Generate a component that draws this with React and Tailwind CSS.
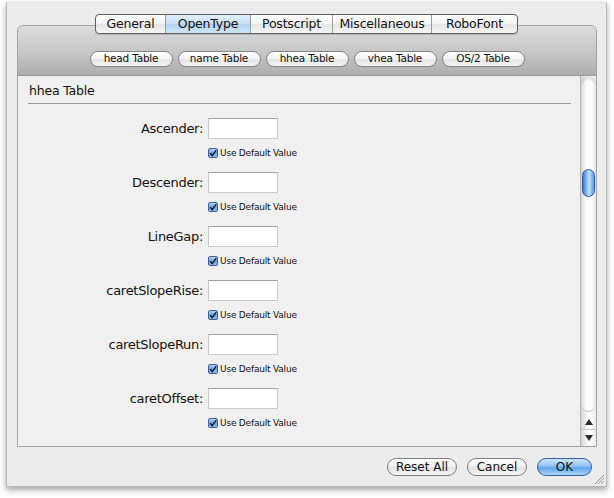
import React from "react";

function Check() {
  return (
    <span className="w-[10px] h-[10px] shrink-0 rounded-[2px] border border-[#3f5f98] bg-[linear-gradient(#b9d4f3,#6a9fe0_50%,#8fbcef)] flex items-center justify-center">
      <svg width="9" height="9" viewBox="0 0 9 9">
        <path d="M1.4 4.2 L3.6 7 L8.2 0.6" fill="none" stroke="#151515" strokeWidth="1.5" />
      </svg>
    </span>
  );
}

function Row({ label }) {
  return (
    <div className="flex flex-col mb-[14px]">
      <div className="flex items-center h-[21px]">
        <div className="w-[185px] text-right text-[13px] tracking-[-0.3px] text-[#111]">{label}</div>
        <div className="ml-[5px] w-[70px] h-[21px] bg-white border border-[#c9c9c9] border-t-[#a0a0a0]" />
      </div>
      <div className="flex items-center mt-[9px] ml-[190px] h-[10px] gap-[2px]">
        <Check />
        <span className="text-[9px] leading-none tracking-[-0.2px] text-[#111]">Use Default Value</span>
      </div>
    </div>
  );
}

const tabs = [
  ["General", 69],
  ["OpenType", 85],
  ["Postscript", 82],
  ["Miscellaneous", 99],
  ["RoboFont", 86],
];

const sub = ["head Table", "name Table", "hhea Table", "vhea Table", "OS/2 Table"];

function PillButton({ children, w, blue }) {
  return (
    <div
      className={
        "h-[18px] rounded-full flex items-center justify-center text-[12px] text-[#111] " +
        (blue
          ? "border border-[#3a5ea6] bg-[linear-gradient(#cfe3fa,#8ec2f5_45%,#5fa6ee_55%,#a9d6fb)]"
          : "border border-[#7e7e7e] bg-[linear-gradient(#ffffff,#f3f3f3_45%,#e3e3e3_55%,#f7f7f7)]")
      }
      style={{ width: w }}
    >
      {children}
    </div>
  );
}

export default function App() {
  return (
    <div className="w-[614px] h-[498px] bg-white overflow-hidden font-['DejaVu_Sans',sans-serif] text-[#111]">
      <div className="relative ml-[6px] mt-[2px] w-[601px] h-[485px] bg-[#ececec] border border-[#b9b9b9] border-t-[#e2e2e2] shadow-[0_3px_6px_rgba(0,0,0,0.35)] flex flex-col">
        {/* segmented tabs */}
        <div className="relative z-10 mt-[11px] self-center flex h-[20px] rounded-[4px] border border-[#5e5e5e] overflow-hidden bg-[linear-gradient(#ffffff,#f4f4f4_50%,#e6e6e6_52%,#f5f5f5)] shadow-[0_1px_1px_rgba(0,0,0,0.15)]">
          {tabs.map(([t, w], i) => (
            <div
              key={t}
              className={
                "flex items-center justify-center text-[12.5px] tracking-[-0.2px] " +
                (i > 0 ? "border-l border-[#9c9c9c] " : "") +
                (t === "OpenType" ? "bg-[linear-gradient(#e3f0fc,#c5def6_50%,#b0d2f3_52%,#cfe6fb)]" : "")
              }
              style={{ width: w }}
            >
              {t}
            </div>
          ))}
        </div>

        {/* tab box */}
        <div className="-mt-[9px] ml-[10px] w-[580px] h-[422px] border border-[#a3a3a3] rounded-t-[6px] flex flex-col overflow-hidden">
          <div className="h-[50px] shrink-0 bg-[linear-gradient(#dcdcdc,#c8c8c8_50%,#aeaeae)] border-b border-[#9a9a9a] flex justify-center gap-[5px] pt-[25px]">
            {sub.map((s) => (
              <div
                key={s}
                className="w-[83px] h-[16px] rounded-full border border-[#858585] bg-[linear-gradient(#ffffff,#f4f4f4_50%,#e4e4e4_55%,#f6f6f6)] flex items-center justify-center text-[10.5px] tracking-[-0.2px]"
              >
                {s}
              </div>
            ))}
          </div>
          <div className="flex-1 flex bg-[#f0f0f0] min-h-0">
            <div className="flex-1 flex flex-col">
              <div className="pl-[11px] pt-[7px] h-[26px] text-[12.5px] leading-[16px] tracking-[-0.2px]">hhea Table</div>
              <div className="ml-[10px] w-[543px] h-px bg-[#9a9a9a] mt-[1px]" />
              <div className="mt-[14px] flex flex-col">
                <Row label="Ascender:" />
                <Row label="Descender:" />
                <Row label="LineGap:" />
                <Row label="caretSlopeRise:" />
                <Row label="caretSlopeRun:" />
                <Row label="caretOffset:" />
              </div>
            </div>
            {/* scrollbar */}
            <div className="w-[16px] flex flex-col border-l border-[#b4b4b4] bg-[linear-gradient(to_right,#d4d4d4,#f4f4f4_35%,#ffffff_60%,#ececec)]">
              <div className="flex-1 rounded-b-[8px] rounded-t-[8px] border-b border-[#c4c4c4] bg-[linear-gradient(to_right,#dedede,#fafafa_35%,#ffffff_60%,#f0f0f0)] shadow-[inset_0_3px_3px_rgba(0,0,0,0.12)] flex flex-col">
                <div className="mt-[93px] mx-auto w-[13px] h-[28px] rounded-full border border-[#2e56a8] bg-[linear-gradient(to_right,#3c78d8,#8cc0f3_35%,#c6e2fb_55%,#5b98e6)]" />
              </div>
              <div className="h-[16px] mt-[2px] flex items-center justify-center border-b border-[#c8c8c8]">
                <svg width="8" height="6" viewBox="0 0 8 6"><path d="M4 0 L8 6 L0 6 Z" fill="#2a2a2a" /></svg>
              </div>
              <div className="h-[16px] flex items-center justify-center">
                <svg width="8" height="6" viewBox="0 0 8 6"><path d="M0 0 L8 0 L4 6 Z" fill="#2a2a2a" /></svg>
              </div>
            </div>
          </div>
        </div>

        {/* bottom buttons */}
        <div className="mt-[11px] flex justify-end pr-[14px] gap-[10px]">
          <PillButton w={70}>Reset All</PillButton>
          <PillButton w={60}>Cancel</PillButton>
          <PillButton w={55} blue>OK</PillButton>
        </div>

        {/* resize grip */}
        <svg className="absolute right-[2px] bottom-[2px]" width="10" height="10" viewBox="0 0 10 10">
          <path d="M10 1 L1 10 M10 4 L4 10 M10 7 L7 10" stroke="#9a9a9a" strokeWidth="1" />
        </svg>
      </div>
    </div>
  );
}
